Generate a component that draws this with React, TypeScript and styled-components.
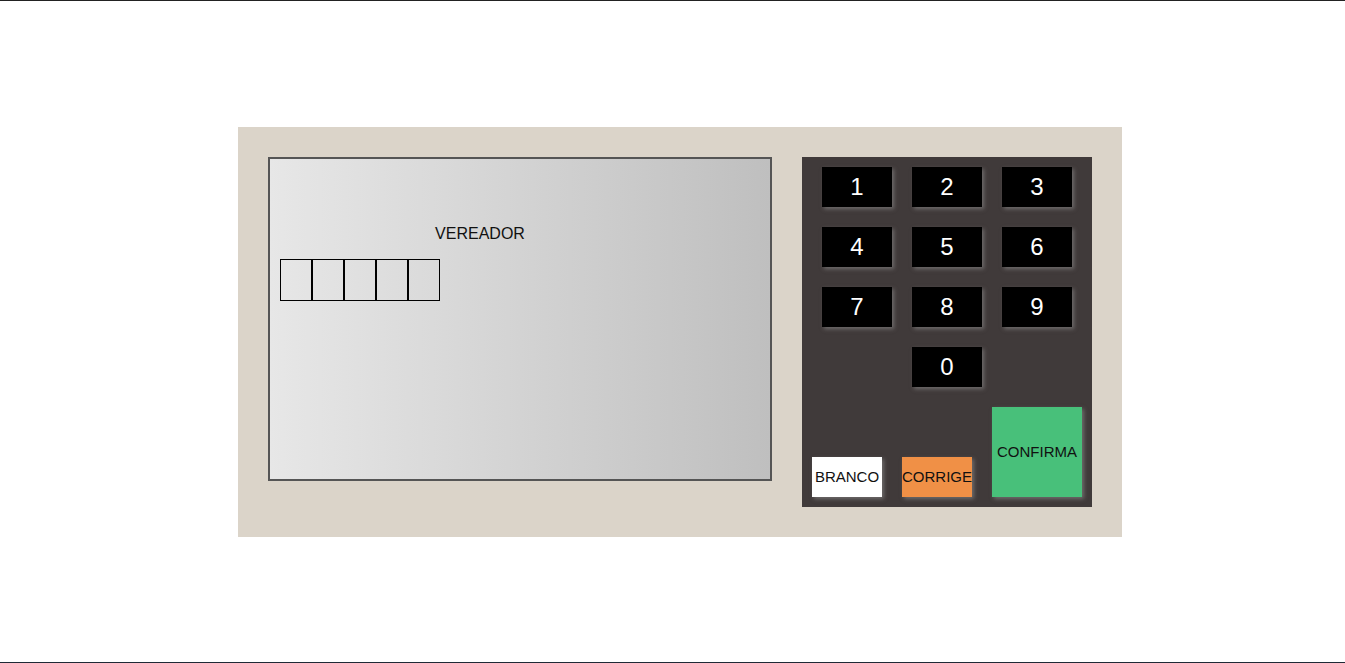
import React from "react";
import styled, { createGlobalStyle } from "styled-components";

const Global = createGlobalStyle`
  html, body { margin: 0; padding: 0; background: #fff; }
  body { font-family: "Liberation Sans", Arial, sans-serif; }
  * { box-sizing: border-box; }
`;

const Page = styled.div`
  height: 663px;
  border-top: 1px solid #222;
  border-bottom: 1px solid #1f2a36;
  display: flex;
  align-items: center;
  justify-content: center;
  padding-left: 15px;
`;

const Urna = styled.div`
  width: 884px;
  height: 410px;
  background: #dbd4c9;
  padding: 30px;
  display: flex;
  align-items: flex-start;
  gap: 30px;
`;

const Screen = styled.div`
  width: 504px;
  height: 324px;
  border: 2px solid #555;
  background: linear-gradient(to right, #e7e7e7, #bfbfbf);
  padding: 66px 10px 0 10px;
  display: flex;
  flex-direction: column;
  gap: 16px;
`;

const Title = styled.div`
  width: 400px;
  text-align: center;
  font-size: 16px;
  line-height: 18px;
  color: #111;
`;

const Digits = styled.div`
  display: flex;
`;

const DigitBox = styled.div`
  width: 32px;
  height: 42px;
  border: 1px solid #000;
`;

const Keypad = styled.div`
  width: 290px;
  height: 350px;
  background: #403a3a;
  padding: 10px;
  display: grid;
  grid-template-columns: repeat(3, 90px);
  grid-template-rows: repeat(4, 60px) 90px;
`;

const Key = styled.button<{ $col?: number }>`
  grid-column: ${(p) => (p.$col ? p.$col : "auto")};
  align-self: start;
  justify-self: center;
  width: 70px;
  height: 40px;
  border: none;
  padding: 0;
  background: #000;
  color: #fff;
  font-family: "Liberation Sans", Arial, sans-serif;
  font-size: 24px;
  box-shadow: 2px 2px 4px rgba(150, 150, 150, 0.55);
  cursor: pointer;
`;

const Action = styled.button<{ $bg: string; $col: number; $tall?: boolean }>`
  grid-column: ${(p) => p.$col};
  grid-row: 5;
  align-self: end;
  justify-self: start;
  width: ${(p) => (p.$tall ? "90px" : "70px")};
  height: ${(p) => (p.$tall ? "90px" : "40px")};
  border: none;
  padding: 0;
  background: ${(p) => p.$bg};
  color: #111;
  font-family: "Liberation Sans", Arial, sans-serif;
  font-size: 15px;
  white-space: nowrap;
  display: flex;
  align-items: center;
  justify-content: center;
  box-shadow: 2px 2px 4px rgba(150, 150, 150, 0.55);
  cursor: pointer;
`;

export default function App() {
  const nums = ["1", "2", "3", "4", "5", "6", "7", "8", "9"];
  return (
    <>
      <Global />
      <Page>
        <Urna>
          <Screen>
            <Title>VEREADOR</Title>
            <Digits>
              {[0, 1, 2, 3, 4].map((i) => (
                <DigitBox key={i} />
              ))}
            </Digits>
          </Screen>
          <Keypad>
            {nums.map((n) => (
              <Key key={n}>{n}</Key>
            ))}
            <Key $col={2}>0</Key>
            <Action $bg="#ffffff" $col={1}>BRANCO</Action>
            <Action $bg="#f09046" $col={2}>CORRIGE</Action>
            <Action $bg="#48c07a" $col={3} $tall>
              CONFIRMA
            </Action>
          </Keypad>
        </Urna>
      </Page>
    </>
  );
}
